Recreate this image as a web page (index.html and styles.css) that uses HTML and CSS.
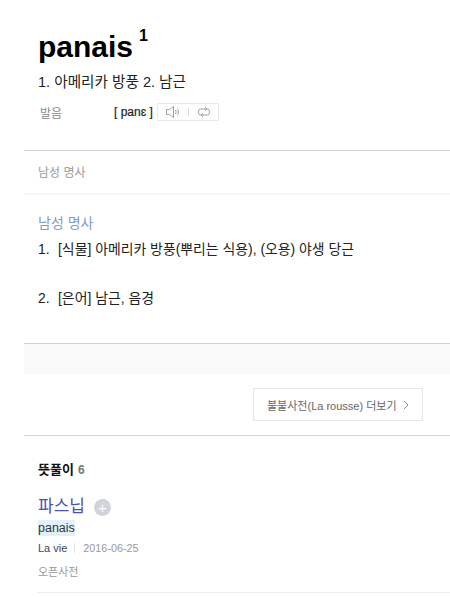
FILE: index.html
```html
<!DOCTYPE html>
<html lang="ko">
<head>
<meta charset="utf-8">
<title>panais</title>
<link rel="stylesheet" href="styles.css">
</head>
<body>
<main class="page">
  <header class="head">
    <h1 class="word">panais<sup class="num">1</sup></h1>
    <p class="summary">1. 아메리카 방풍 2. 남근</p>
    <div class="pron">
      <span class="pron-label">발음</span>
      <span class="pron-text">[ panɛ ]</span>
      <span class="pron-btns">
        <svg class="ico" width="14" height="12" viewBox="0 0 14 12" fill="none" stroke="#9a9fa6" stroke-width="1"><path d="M.5 3.500h3l4-3v11l-4-3h-3z"/><path d="M9.500 4c.8 1.200.8 2.800 0 4M11.500 2.800c1.200 2 1.200 4.400 0 6.400"/></svg>
        <i class="sep"></i>
        <svg class="ico" width="12" height="12" viewBox="0 0 12 12" fill="none" stroke="#9a9fa6" stroke-width="1"><path d="M3 9H2.500A1.800 1.800 0 0 1 .7 7.200V4.800A1.800 1.800 0 0 1 2.500 3h6"/><path d="M9 3h.5a1.800 1.800 0 0 1 1.800 1.800v2.400A1.800 1.800 0 0 1 9.500 9h-6"/><path d="M7 1l2 2-2 2M5 7 3 9l2 2"/></svg>
      </span>
    </div>
  </header>
  <div class="tab">남성 명사</div>
  <section class="defs">
    <h2 class="pos">남성 명사</h2>
    <ol class="list">
      <li><span class="n">1.</span>[식물] 아메리카 방풍(뿌리는 식용), (오용) 야생 당근</li>
      <li><span class="n">2.</span>[은어] 남근, 음경</li>
    </ol>
  </section>
  <div class="band"></div>
  <div class="more-row">
    <a class="more">불불사전(La rousse) 더보기
      <svg width="6" height="10" viewBox="0 0 6 10" fill="none" stroke="#8a8a8a" stroke-width="1"><path d="M.8.8 5 5 .8 9.200"/></svg>
    </a>
  </div>
  <section class="open">
    <h3 class="open-title">뜻풀이<span class="count">6</span></h3>
    <div class="entry">
      <div class="entry-word"><span class="term">파스닙</span><span class="plus">+</span></div>
      <div class="entry-mean"><mark class="hl">panais</mark></div>
      <div class="meta"><span class="author">La vie</span><i class="bar"></i><span class="date">2016-06-25</span></div>
      <div class="src">오픈사전</div>
    </div>
  </section>
</main>
</body>
</html>
```
FILE: styles.css
```css
* { box-sizing: border-box; }
html, body { margin: 0; padding: 0; background: #fff; }
body {
  height: 597px;
  overflow: hidden;
  font-family: "Liberation Sans", "Noto Sans CJK KR", sans-serif;
  color: #111;
}
.page { padding-left: 24px; }
.head { height: 151px; padding: 28px 0 0 14px; border-bottom: 1px solid #d4d4d4; }
.word { margin: 0; font-size: 30px; line-height: 37px; font-weight: 700; color: #000; }
.num { font-size: 16px; line-height: 0; position: relative; top: -4px; vertical-align: 12px; margin-left: 6px; }
.summary { margin: 7px 0 0; font-size: 14.600px; line-height: 20px; color: #222; }
.pron { display: flex; align-items: center; height: 18px; margin-top: 11px; font-size: 12px; }
.pron-label { width: 76px; padding-left: 2px; color: #888; }
.pron-text { width: 43px; color: #222; -webkit-text-stroke: .2px #222; white-space: nowrap; }
.pron-btns { display: flex; align-items: center; width: 62px; height: 18px; padding-left: 8px; border: 1px solid #e8e8e8; }
.ico { display: block; }
.sep { width: 1px; height: 8px; margin: 0 9px 0 8px; background: #ddd; }
.tab { height: 44px; padding: 14px 0 0 14px; font-size: 12px; line-height: 16px; color: #999; border-bottom: 2px solid #f6f6f6; }
.defs { height: 148px; padding: 18px 0 0 14px; }
.pos { margin: 0; font-size: 14px; line-height: 20px; font-weight: 400; color: #7d9cc6; }
.list { list-style: none; margin: 6px 0 0; padding: 0; font-size: 13.900px; line-height: 20px; color: #222; }
.list li { margin-bottom: 29px; }
.n { display: inline-block; width: 20px; }
.band { height: 31px; background: #f9f9f9; border-top: 1px solid #d0d0d0; }
.more-row { display: flex; justify-content: flex-end; height: 62px; padding: 14px 27px 0 0; border-bottom: 1px solid #d4d4d4; }
.more { display: flex; align-items: center; gap: 6px; height: 33px; padding: 0 0 0 13px; width: 170px; border: 1px solid #e6e6e6; font-size: 11px; color: #666; white-space: nowrap; }
.open { padding: 0 0 0 14px; }
.open-title { margin: 26px 0 0; font-size: 13px; line-height: 16px; font-weight: 700; color: #111; }
.count { margin-left: 4px; font-size: 12px; color: #777; font-weight: 700; }
.entry { height: 98px; margin-top: 17px; border-bottom: 1px solid #eee; }
.entry-word { display: flex; align-items: center; height: 24px; }
.term { font-size: 17px; line-height: 24px; color: #4a50b8; }
.plus { display: flex; align-items: center; justify-content: center; width: 17px; height: 17px; margin-left: 9px; border-radius: 50%; background: #cfd3da; color: #fff; font-size: 15px; line-height: 17px; }
.entry-mean { font-size: 12.500px; line-height: 18px; }
.hl { background: #e3f1fb; color: #333; padding: 1px 0; }
.meta { display: flex; align-items: center; margin-top: 3px; font-size: 11px; line-height: 16px; }
.author { color: #445; }
.bar { width: 1px; height: 10px; margin: 0 8px 0 7px; background: #e2e2e2; }
.date { color: #999; font-size: 10.800px; }
.src { margin-top: 8px; font-size: 11px; line-height: 16px; color: #999; }
```
